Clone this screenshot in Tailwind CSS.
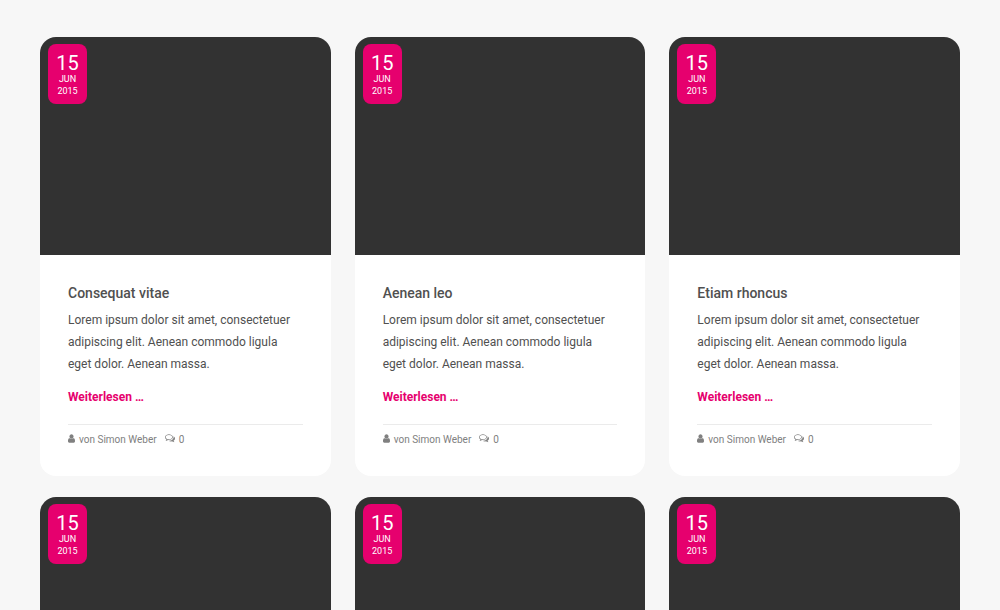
<!DOCTYPE html>
<html lang="de">
<head>
<meta charset="utf-8">
<meta name="viewport" content="width=device-width, initial-scale=1">
<title>Blog</title>
<script src="https://cdn.jsdelivr.net/npm/@tailwindcss/browser@4"></script>
</head>
<body class="bg-[#f7f7f7] font-[Roboto,sans-serif] text-[#505050]">
<svg class="hidden" aria-hidden="true">
  <symbol id="user" viewBox="0 0 1280 1536"><path d="M1280 1271q0 109-62.500 187t-150.500 78h-854q-88 0-150.500-78t-62.500-187q0-85 8.500-160.500t31.500-152 58.500-131 94-89 134.500-34.500q131 128 313 128t313-128q76 0 134.500 34.500t94 89 58.500 131 31.500 152 8.500 160.500zM1024 384q0 159-112.500 271.500t-271.500 112.500-271.500-112.500-112.500-271.500 112.500-271.500 271.500-112.500 271.500 112.500 112.500 271.500z"/></symbol>
  <symbol id="comments" viewBox="0 220 1792 1580"><path d="M704 384q-153 0-286 52t-211.500 141-78.500 191q0 82 53 158t149 132l97 56-35 84q34-20 62-39l44-31 53 10q78 14 153 14 153 0 286-52t211.500-141 78.500-191-78.500-191-211.500-141-286-52zm0-128q191 0 353.500 68.500t256.500 186.500 94 257-94 257-256.500 186.500-353.500 68.500q-86 0-176-16-124 88-278 128-36 9-86 16h-3q-11 0-20.500-8t-11.500-21q-1-3-1-6.500t.5-6.500 2-6l2.500-5 3.500-5.500 4-5 4.500-5 4-4.500q5-6 23-25t26-29.500 22.500-29 25-38.500 20.500-44q-124-72-195-177t-71-224q0-139 94-257t256.500-186.500 353.500-68.500zm822 1169q10 24 20.500 44t25 38.500 22.500 29 26 29.500 23 25q1 1 4 4.500t4.500 5 4 5 3.500 5.500l2.500 5 2 6 .5 6.500-1 6.500q-3 14-13 22t-22 7q-50-7-86-16-154-40-278-128-90 16-176 16-271 0-472-132 58 4 88 4 161 0 309-45t264-129q125-92 192-212t67-254q0-77-23-152 129 71 204 178t75 230q0 120-71 224.500t-195 176.500z"/></symbol>
</svg>
<main class="grid grid-cols-3 gap-x-6 gap-y-[21px] px-10 pt-[37px] pb-10">
  <article class="overflow-hidden rounded-2xl bg-white">
    <div class="relative h-[218px] bg-[#323232]">
      <time datetime="2015-06-15" class="absolute top-[7px] left-2 flex w-[39px] flex-col items-center rounded-lg bg-[#e6006e] pt-[9px] pb-[7px] text-[9px] leading-3 text-white"><span class="text-xl leading-5">15</span><span>JUN</span><span>2015</span></time>
    </div>
    <div class="p-7">
      <h2 class="text-sm leading-5 font-medium">Consequat vitae</h2>
      <p class="mt-1.5 text-xs leading-[22px]">Lorem ipsum dolor sit amet, consectetuer adipiscing elit. Aenean commodo ligula eget dolor. Aenean massa.</p>
      <a href="#" class="mt-3 block text-xs leading-5 font-bold text-[#e6006e]">Weiterlesen …</a>
      <footer class="mt-[17px] flex items-baseline border-t border-[#ebebeb] pt-[7px] text-[10px] leading-4 text-[#808080]">
        <svg class="mr-1 h-[9px] w-[7px] fill-current" aria-hidden="true"><use href="#user"/></svg><span>von Simon Weber</span>
        <svg class="mr-1 ml-2 h-[9px] w-2.5 fill-current" aria-hidden="true"><use href="#comments"/></svg><span>0</span>
      </footer>
    </div>
  </article>
  <article class="overflow-hidden rounded-2xl bg-white">
    <div class="relative h-[218px] bg-[#323232]">
      <time datetime="2015-06-15" class="absolute top-[7px] left-2 flex w-[39px] flex-col items-center rounded-lg bg-[#e6006e] pt-[9px] pb-[7px] text-[9px] leading-3 text-white"><span class="text-xl leading-5">15</span><span>JUN</span><span>2015</span></time>
    </div>
    <div class="p-7">
      <h2 class="text-sm leading-5 font-medium">Aenean leo</h2>
      <p class="mt-1.5 text-xs leading-[22px]">Lorem ipsum dolor sit amet, consectetuer adipiscing elit. Aenean commodo ligula eget dolor. Aenean massa.</p>
      <a href="#" class="mt-3 block text-xs leading-5 font-bold text-[#e6006e]">Weiterlesen …</a>
      <footer class="mt-[17px] flex items-baseline border-t border-[#ebebeb] pt-[7px] text-[10px] leading-4 text-[#808080]">
        <svg class="mr-1 h-[9px] w-[7px] fill-current" aria-hidden="true"><use href="#user"/></svg><span>von Simon Weber</span>
        <svg class="mr-1 ml-2 h-[9px] w-2.5 fill-current" aria-hidden="true"><use href="#comments"/></svg><span>0</span>
      </footer>
    </div>
  </article>
  <article class="overflow-hidden rounded-2xl bg-white">
    <div class="relative h-[218px] bg-[#323232]">
      <time datetime="2015-06-15" class="absolute top-[7px] left-2 flex w-[39px] flex-col items-center rounded-lg bg-[#e6006e] pt-[9px] pb-[7px] text-[9px] leading-3 text-white"><span class="text-xl leading-5">15</span><span>JUN</span><span>2015</span></time>
    </div>
    <div class="p-7">
      <h2 class="text-sm leading-5 font-medium">Etiam rhoncus</h2>
      <p class="mt-1.5 text-xs leading-[22px]">Lorem ipsum dolor sit amet, consectetuer adipiscing elit. Aenean commodo ligula eget dolor. Aenean massa.</p>
      <a href="#" class="mt-3 block text-xs leading-5 font-bold text-[#e6006e]">Weiterlesen …</a>
      <footer class="mt-[17px] flex items-baseline border-t border-[#ebebeb] pt-[7px] text-[10px] leading-4 text-[#808080]">
        <svg class="mr-1 h-[9px] w-[7px] fill-current" aria-hidden="true"><use href="#user"/></svg><span>von Simon Weber</span>
        <svg class="mr-1 ml-2 h-[9px] w-2.5 fill-current" aria-hidden="true"><use href="#comments"/></svg><span>0</span>
      </footer>
    </div>
  </article>
  <article class="overflow-hidden rounded-2xl bg-white">
    <div class="relative h-[218px] bg-[#323232]">
      <time datetime="2015-06-15" class="absolute top-[7px] left-2 flex w-[39px] flex-col items-center rounded-lg bg-[#e6006e] pt-[9px] pb-[7px] text-[9px] leading-3 text-white"><span class="text-xl leading-5">15</span><span>JUN</span><span>2015</span></time>
    </div>
  </article>
  <article class="overflow-hidden rounded-2xl bg-white">
    <div class="relative h-[218px] bg-[#323232]">
      <time datetime="2015-06-15" class="absolute top-[7px] left-2 flex w-[39px] flex-col items-center rounded-lg bg-[#e6006e] pt-[9px] pb-[7px] text-[9px] leading-3 text-white"><span class="text-xl leading-5">15</span><span>JUN</span><span>2015</span></time>
    </div>
  </article>
  <article class="overflow-hidden rounded-2xl bg-white">
    <div class="relative h-[218px] bg-[#323232]">
      <time datetime="2015-06-15" class="absolute top-[7px] left-2 flex w-[39px] flex-col items-center rounded-lg bg-[#e6006e] pt-[9px] pb-[7px] text-[9px] leading-3 text-white"><span class="text-xl leading-5">15</span><span>JUN</span><span>2015</span></time>
    </div>
  </article>
</main>
</body>
</html>
